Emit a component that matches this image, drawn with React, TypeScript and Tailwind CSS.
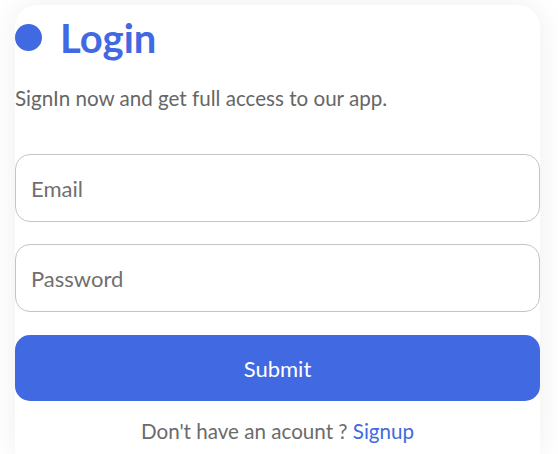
export default function App() {
  return (
    <div
      className="h-screen w-full overflow-hidden bg-white pt-[5px] px-[15px]"
      style={{ fontFamily: "Lato, 'Noto Sans', sans-serif" }}
    >
      <div className="w-[525px] h-[449px] bg-white rounded-t-[22px] shadow-[0_0_30px_rgba(0,0,0,0.07)]">
        <div className="flex items-center h-[64px] pt-[1px]">
          <span className="block w-[27px] h-[27px] rounded-full bg-[#4169e1]" />
          <h1 className="ml-[18px] text-[40px] leading-[46px] font-bold text-[#4169e1]">Login</h1>
        </div>
        <p className="mt-[15px] text-[20.6px] leading-[28px] text-[#666666]">
          SignIn now and get full access to our app.
        </p>
        <div className="mt-[42px] flex flex-col gap-[22px]">
          <input
            placeholder="Email"
            className="h-[68px] w-full rounded-[15px] border border-[#c4c4c4] pl-[15px] text-[22px] outline-none placeholder:text-[#707070]"
          />
          <input
            placeholder="Password"
            type="password"
            className="h-[68px] w-full rounded-[15px] border border-[#c4c4c4] pl-[15px] text-[22px] outline-none placeholder:text-[#707070]"
          />
        </div>
        <button className="mt-[23px] h-[66px] w-full rounded-[15px] bg-[#4169e1] text-[22px] text-white">
          Submit
        </button>
        <p className="mt-[16px] text-center text-[20.6px] leading-[28px] text-[#6b6b6b]">
          Don't have an acount ? <span className="text-[#4169e1]">Signup</span>
        </p>
      </div>
    </div>
  );
}
